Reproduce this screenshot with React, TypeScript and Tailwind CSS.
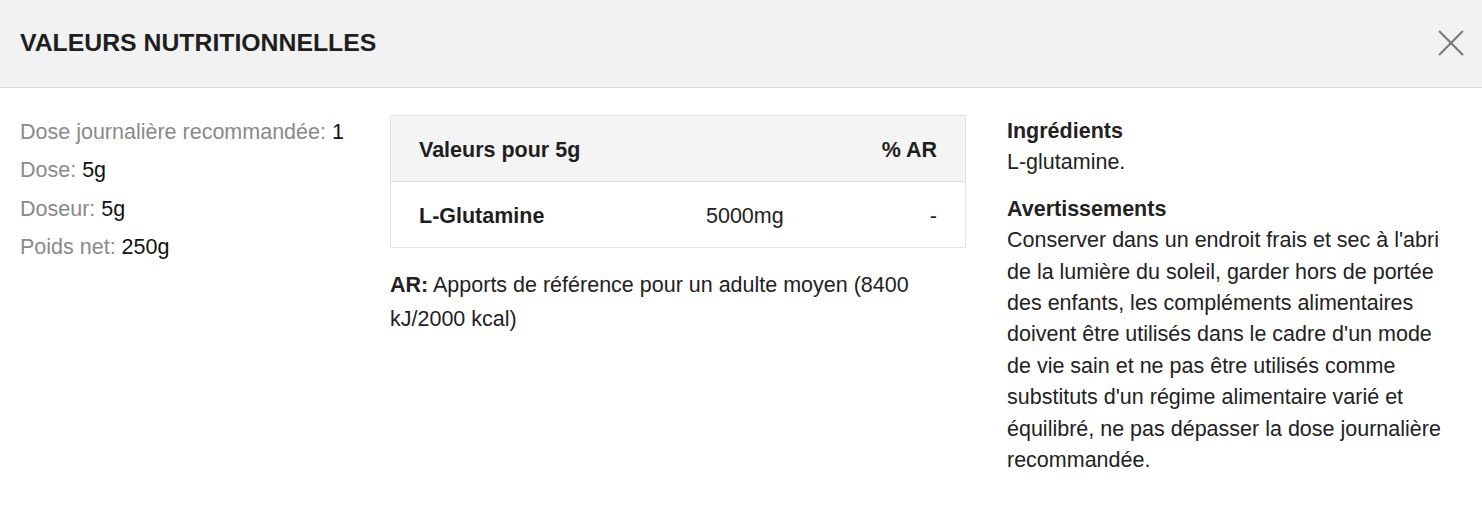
const font = "font-['Liberation_Sans','Helvetica',Arial,sans-serif]";

function CloseIcon() {
  return (
    <svg viewBox="0 0 24 24" className="w-[26px] h-[26px]" fill="none" stroke="#7a7a7a" strokeWidth="2">
      <path d="M1 1L23 23M23 1L1 23" />
    </svg>
  );
}

const specs = [
  { label: "Dose journalière recommandée:", value: "1" },
  { label: "Dose:", value: "5g" },
  { label: "Doseur:", value: "5g" },
  { label: "Poids net:", value: "250g" },
];

export default function App() {
  return (
    <div className={`w-[1482px] h-[510px] bg-white text-[#222] ${font}`}>
      {/* Header */}
      <div className="h-[88px] flex items-center justify-between pl-5 pr-[18px] bg-[#f2f2f2] border-b border-[#dadada]">
        <h2 className="text-[24.8px] font-bold text-[#1e1e1e] mt-[-1px]">VALEURS NUTRITIONNELLES</h2>
        <button className="p-0 mt-[-1px]">
          <CloseIcon />
        </button>
      </div>

      {/* Body */}
      <div className="flex pl-5 pr-[27px] pt-[27px] text-[21.5px]">
        {/* Left: dosage */}
        <div className="w-[330px] mt-[2px] flex flex-col gap-[7.3px] leading-[31px]">
          {specs.map((s) => (
            <div key={s.label} className="whitespace-nowrap">
              <span className="text-[#8a8a8a]">{s.label}</span> <span className="text-[#111]">{s.value}</span>
            </div>
          ))}
        </div>

        {/* Middle: table */}
        <div className="w-[576px] ml-[40px]">
          <div className="border border-[#e3e3e3]">
            <div className="h-[66px] flex items-center justify-between px-[28px] pt-[3px] bg-[#f4f4f4] border-b border-[#dedede] font-bold text-[#1e1e1e]">
              <span>Valeurs pour 5g</span>
              <span>% AR</span>
            </div>
            <div className="h-[65px] flex items-center px-[28px] pt-[3px]">
              <span className="w-[287px] font-bold text-[#1e1e1e]">L-Glutamine</span>
              <span className="flex-1">5000mg</span>
              <span>-</span>
            </div>
          </div>
          <p className="mt-[20px] leading-[34px]">
            <span className="font-bold">AR:</span> Apports de référence pour un adulte moyen (8400 kJ/2000 kcal)
          </p>
        </div>

        {/* Right: ingredients & warnings */}
        <div className="flex-1 ml-[41px] mt-[1px] leading-[31.4px]">
          <h3 className="font-bold">Ingrédients</h3>
          <p>L-glutamine.</p>
          <h3 className="font-bold mt-[15px]">Avertissements</h3>
          <p>
            Conserver dans un endroit frais et sec à l'abri de la lumière du soleil, garder hors de portée des
            enfants, les compléments alimentaires doivent être utilisés dans le cadre d'un mode de vie sain et ne
            pas être utilisés comme substituts d'un régime alimentaire varié et équilibré, ne pas dépasser la dose
            journalière recommandée.
          </p>
        </div>
      </div>
    </div>
  );
}
